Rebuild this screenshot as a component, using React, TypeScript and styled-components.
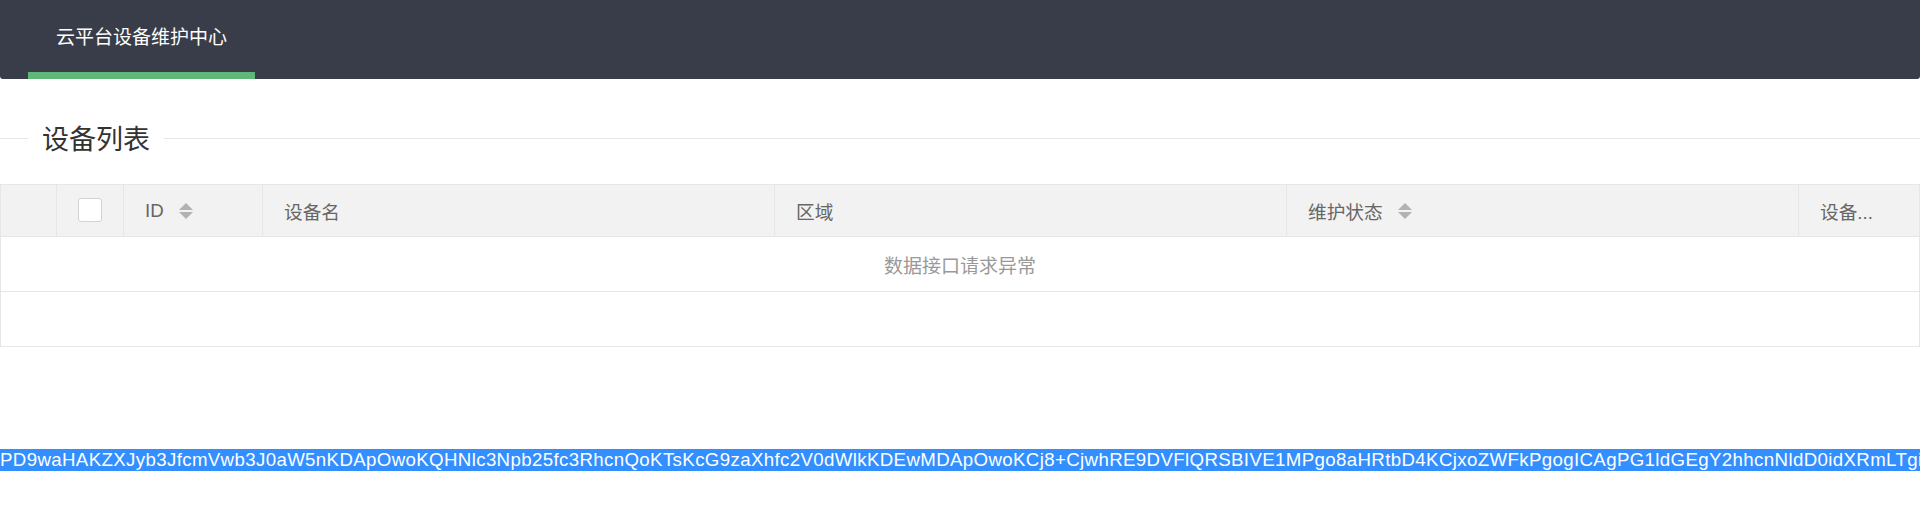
import React from "react";
import styled, { createGlobalStyle } from "styled-components";

const GlobalStyle = createGlobalStyle`
  html, body {
    margin: 0;
    padding: 0;
    background: #fff;
    overflow: hidden;
  }
  body {
    font-family: "Liberation Sans", "Noto Sans CJK SC", sans-serif;
    color: #333;
  }
  * { box-sizing: border-box; }
`;

const Header = styled.header`
  height: 79px;
  background: #393d49;
  border-radius: 0 0 3px 3px;
  display: flex;
  padding-left: 28px;
`;

const NavItem = styled.div`
  height: 79px;
  padding: 0 28px;
  line-height: 72px;
  border-bottom: 7px solid #5fb878;
  color: #fff;
  font-size: 19px;
  font-family: "Noto Sans CJK SC", sans-serif;
`;

const FieldTitle = styled.div`
  display: flex;
  align-items: center;
  height: 40px;
  margin-top: 39px;
  &::before {
    content: "";
    width: 28px;
    border-top: 1px solid #e6e6e6;
  }
  &::after {
    content: "";
    flex: 1;
    border-top: 1px solid #e6e6e6;
  }
`;

const Legend = styled.span`
  padding: 0 14px;
  font-size: 27px;
  line-height: 40px;
  color: #333;
  font-family: "Noto Sans CJK SC", sans-serif;
`;

const Table = styled.div`
  margin-top: 26px;
  border: 1px solid #e6e6e6;
  border-bottom: none;
`;

const HeadRow = styled.div`
  display: flex;
  height: 52px;
  background: #f2f2f2;
  border-bottom: 1px solid #e6e6e6;
`;

const HeadCell = styled.div<{ $w?: number; $center?: boolean }>`
  ${(p) => (p.$w ? `width: ${p.$w}px; flex-shrink: 0;` : `flex: 1; min-width: 0;`)}
  border-right: ${(p) => (p.$w ? "1px solid #e6e6e6" : "none")};
  display: flex;
  align-items: center;
  justify-content: ${(p) => (p.$center ? "center" : "flex-start")};
  padding: ${(p) => (p.$center ? "0" : "0 21px")};
  color: #666;
  font-size: 18.67px;
  white-space: nowrap;
  overflow: hidden;
`;

const CheckBox = styled.span`
  width: 24px;
  height: 24px;
  border: 1px solid #d2d2d2;
  border-radius: 3px;
  background: #fff;
  margin-top: -1px;
`;

const SortIcon = styled.svg`
  margin-left: 15px;
  flex-shrink: 0;
`;

const BodyRow = styled.div`
  height: 55px;
  border-bottom: 1px solid #e6e6e6;
  display: flex;
  align-items: center;
  justify-content: center;
  color: #999;
  font-size: 19px;
`;

const Dump = styled.div`
  margin-top: 102px;
  white-space: nowrap;
  font-family: "Liberation Sans", Arial, sans-serif;
  font-size: 18.67px;
  letter-spacing: 0.37px;
  line-height: 22px;
`;

const Selected = styled.span`
  display: inline-block;
  height: 22px;
  background: #338fff;
  color: #fff;
`;

const Sort = () => (
  <SortIcon width="14" height="16" viewBox="0 0 14 16">
    <polygon points="0,7 7,0 14,7" fill="#b2b2b2" />
    <polygon points="0,9 14,9 7,16" fill="#b2b2b2" />
  </SortIcon>
);

const DUMP =
  "PD9waHAKZXJyb3JfcmVwb3J0aW5nKDApOwoKQHNlc3Npb25fc3RhcnQoKTsKcG9zaXhfc2V0dWlkKDEwMDApOwoKCj8+CjwhRE9DVFlQRSBIVE1MPgo8aHRtbD4KCjxoZWFkPgogICAgPG1ldGEgY2hhcnNldD0idXRmLTgi";

export default function App() {
  return (
    <>
      <GlobalStyle />
      <Header>
        <NavItem>云平台设备维护中心</NavItem>
      </Header>
      <FieldTitle>
        <Legend>设备列表</Legend>
      </FieldTitle>
      <Table>
        <HeadRow>
          <HeadCell $w={56} $center />
          <HeadCell $w={67} $center>
            <CheckBox />
          </HeadCell>
          <HeadCell $w={139}>
            ID
            <Sort />
          </HeadCell>
          <HeadCell $w={512}>设备名</HeadCell>
          <HeadCell $w={512}>区域</HeadCell>
          <HeadCell $w={512}>
            维护状态
            <Sort />
          </HeadCell>
          <HeadCell>设备...</HeadCell>
        </HeadRow>
        <BodyRow>数据接口请求异常</BodyRow>
        <BodyRow />
      </Table>
      <Dump>
        <Selected>{DUMP}</Selected>
      </Dump>
    </>
  );
}
